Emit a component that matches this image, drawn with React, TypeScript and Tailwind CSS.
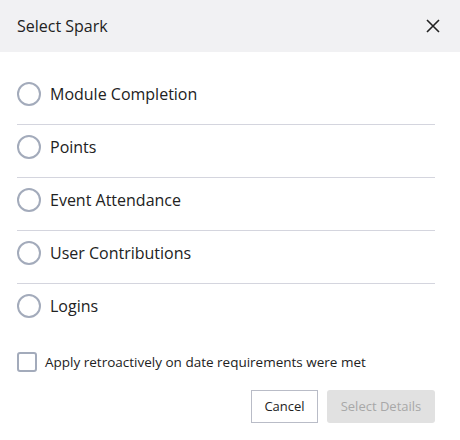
const OPTIONS = [
  "Module Completion",
  "Points",
  "Event Attendance",
  "User Contributions",
  "Logins",
];

const App = () => {
  return (
    <div className="w-[460px] h-[440px] bg-white text-[#222] font-['Open_Sans',sans-serif]">
      <div className="h-[52px] bg-[#f1f1f3] flex items-center justify-between pl-[17px] pr-[20px]">
        <h3 className="text-[16px] leading-none">Select Spark</h3>
        <svg width="14" height="14" viewBox="0 0 14 14" className="text-[#222]">
          <path d="M1 1 L13 13 M13 1 L1 13" stroke="currentColor" strokeWidth="1.6" />
        </svg>
      </div>

      <div className="px-[17px] pt-[20px]">
        {OPTIONS.map((label, index) => (
          <div
            key={label}
            className={`flex items-start gap-[9px] pt-[10px] h-[53px] w-[418px] ${
              index < OPTIONS.length - 1 ? "border-b border-[#d4d5de]" : ""
            }`}
          >
            <span className="w-[24px] h-[24px] rounded-full border-2 border-[#a3abbb] shrink-0" />
            <span className="text-[16px] leading-[24px]">{label}</span>
          </div>
        ))}

        <label className="flex items-center gap-[8px] mt-[15px]">
          <span className="w-[20px] h-[20px] rounded-[3px] border-2 border-[#a3abbb] shrink-0" />
          <span className="text-[13.5px] leading-[20px]">
            Apply retroactively on date requirements were met
          </span>
        </label>

        <div className="flex justify-end gap-[9px] mt-[18px] w-[418px]">
          <button className="h-[33px] w-[67px] border border-[#b9bcc7] bg-white text-[13px] font-medium text-[#222]">
            Cancel
          </button>
          <button className="h-[33px] w-[108px] rounded-[3px] bg-[#e1e1e1] text-[13px] font-medium text-[#a8a8a8]">
            Select Details
          </button>
        </div>
      </div>
    </div>
  );
};

export default App;
